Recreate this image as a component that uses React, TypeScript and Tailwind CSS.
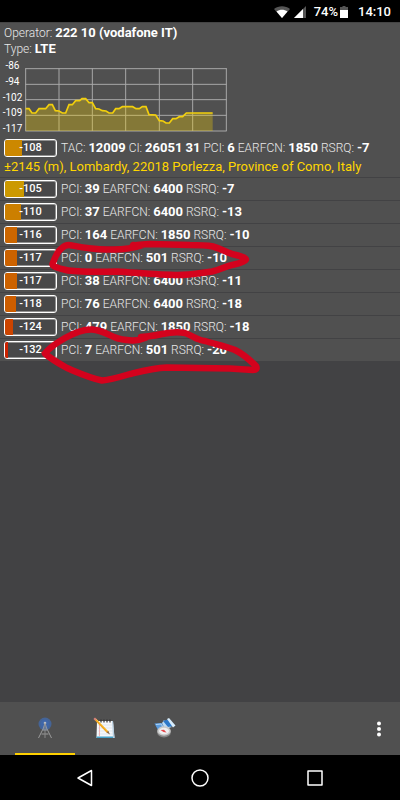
import React from "react";

type Field = [label: string, value: string];

interface Cell {
  level: number;
  fill: number;
  color: string;
  fields: Field[];
}

const serving: Cell = {
  level: -108,
  fill: 17,
  color: "#cc8800",
  fields: [
    ["TAC:", "12009"],
    ["CI:", "26051 31"],
    ["PCI:", "6"],
    ["EARFCN:", "1850"],
    ["RSRQ:", "-7"],
  ],
};

const cell = (
  level: number,
  fill: number,
  color: string,
  pci: string,
  earfcn: string,
  rsrq: string,
): Cell => ({
  level,
  fill,
  color,
  fields: [
    ["PCI:", pci],
    ["EARFCN:", earfcn],
    ["RSRQ:", rsrq],
  ],
});

const neighbours: Cell[] = [
  cell(-105, 19, "#cc9900", "39", "6400", "-7"),
  cell(-110, 16, "#cc7f00", "37", "6400", "-13"),
  cell(-116, 12, "#cc6600", "164", "1850", "-10"),
  cell(-117, 12, "#cc6200", "0", "501", "-10"),
  cell(-117, 12, "#cc6200", "38", "6400", "-11"),
  cell(-118, 11, "#cc5d00", "76", "6400", "-18"),
  cell(-124, 8, "#cc4400", "479", "1850", "-18"),
  cell(-132, 3, "#cc2200", "7", "501", "-20"),
];

function LevelBadge({ level, fill, color }: Cell) {
  return (
    <div className="relative h-[18px] w-[53px] shrink-0 overflow-hidden rounded-[3px] border border-white bg-[#484849] ring-1 ring-inset ring-white/40">
      <div className="h-full" style={{ width: fill, backgroundColor: color }} />
      <span className="absolute inset-0 text-center text-[11px] leading-4 font-medium text-white">
        {level}
      </span>
    </div>
  );
}

function Fields({ fields }: { fields: Field[] }) {
  return (
    <p className="text-[12px] leading-5 font-light whitespace-nowrap text-[#e8e8e8]">
      {fields.map(([label, value]) => (
        <React.Fragment key={label}>
          {label} <b className="text-[13px] font-bold text-white">{value}</b>{" "}
        </React.Fragment>
      ))}
    </p>
  );
}

const line =
  "77,161 87,161 96,174 107,174 117,161 137,161 147,149 157,149 166,167 177,168 187,174 197,174 207,149 217,149 227,137 239,137 246,131 257,131 267,143 277,143 287,161 297,162 307,167 318,168 327,174 338,174 347,161 357,161 367,155 398,155 408,161 418,161 427,155 438,155 447,179 467,180 478,197 489,198 498,204 508,204 518,191 528,191 538,185 548,185 559,174 638,174";

function Chart() {
  return (
    <div className="mt-[2px] flex">
      <div className="flex h-[76px] w-[25px] flex-col justify-between text-center text-[10px] leading-[13px] text-white">
        {["-86", "-94", "-102", "-109", "-117"].map((t) => (
          <span key={t}>{t}</span>
        ))}
      </div>
      <svg
        className="mt-[9px] h-16 w-[202px]"
        viewBox="75 39 606 192"
        role="img"
        aria-label="Signal level history"
      >
        <g stroke="#a8a8a8" strokeWidth="3" fill="none">
          {[77, 177, 277, 377, 478, 578, 679].map((x) => (
            <path key={x} d={`M${x} 40V228`} />
          ))}
          {[41, 88, 134, 181, 228].map((y) => (
            <path key={y} d={`M76 ${y}H680`} />
          ))}
        </g>
        <polygon points={`77,228 ${line} 638,228`} fill="#ffd700" opacity=".3" />
        <polyline points={line} fill="none" stroke="#f2cf0c" strokeWidth="5" />
      </svg>
    </div>
  );
}

function StatusBar() {
  return (
    <header className="flex h-[22px] items-center justify-end bg-black pt-[2px] pr-[9px] text-[13px] leading-5 font-medium text-white">
      <svg className="mr-1 h-3 w-4" viewBox="0 0 16 12" aria-hidden="true">
        <path d="M0 3C4.500-.7 11.500-.7 16 3L8 12Z" fill="#555" />
        <path d="M2.500 5.500C6 3 10 3 13.500 5.500L8 12Z" fill="#fff" />
      </svg>
      <svg className="mr-2 h-3 w-3" viewBox="0 0 12 12" aria-hidden="true">
        <path d="M12 0V12H0Z" fill="#555" />
        <path d="M9 3V12H0Z" fill="#fff" />
      </svg>
      <span>74%</span>
      <svg className="mr-[10px] ml-[2px] h-3 w-2" viewBox="0 0 8 12" aria-hidden="true">
        <path d="M2.500 0h3v1H8v11H0V1h2.500Z" fill="#555" />
        <path d="M0 4h8v8H0Z" fill="#fff" />
      </svg>
      <span>14:10</span>
    </header>
  );
}

function TowerIcon() {
  return (
    <svg className="h-6 w-6" viewBox="0 0 24 24" fill="none" aria-hidden="true">
      <circle cx="12" cy="8" r="6.500" fill="#456496" />
      <circle cx="12" cy="8" r="4.500" fill="#3f66a8" />
      <circle cx="12" cy="7" r="1.300" fill="#b5bcc8" />
      <path d="M12 7 10.500 12 5.500 22M12 7 13.500 12 18.500 22M10 14h4M8.500 18h7" stroke="#a3a3a3" strokeWidth=".9" />
      <path d="M12 8V22" stroke="#888" strokeWidth="1" />
    </svg>
  );
}

function NotepadIcon() {
  return (
    <svg className="h-6 w-6" viewBox="0 0 24 24" fill="none" aria-hidden="true">
      <path d="M4 5H20L21.500 22H3.500Z" fill="#f5f7fa" />
      <path d="M3.500 20.500H21.300L21.500 22H3.500Z" fill="#43a0c8" />
      <path d="M20 5 21.500 22H20L19 5Z" fill="#b5cde0" />
      <path d="M5 9H19.500M5 12H19.500M5 15H20M5 18H20" stroke="#d5dfe9" strokeWidth=".7" />
      <path d="M6.500 7V20" stroke="#f0a4a4" strokeWidth=".8" />
      <path d="M8 3.500v3M11 3.500v3M14 3.500v3M17 3.500v3" stroke="#333" strokeWidth="1.200" />
      <path d="M2.500 3.500 14.500 16" stroke="#f0a51c" strokeWidth="2" />
      <path d="M3 3 15 15.500" stroke="#ffd35a" strokeWidth=".7" />
      <path d="M1.200 2.200 3 4" stroke="#d98378" strokeWidth="2.200" />
      <path d="M13.500 16.500 17 18.500 15.300 14.800Z" fill="#8c6c48" />
    </svg>
  );
}

function MapCompassIcon() {
  return (
    <svg className="h-6 w-6" viewBox="0 0 24 24" fill="none" aria-hidden="true">
      <path d="M1.500 7.500 9 7 12 13 5 14Z" fill="#5b9bdd" />
      <path d="M9 7 11 4 15 9 19 11 12 13Z" fill="#b9daf5" />
      <path d="M10 5 15 3.500 20 10 15 11Z" fill="#2d78c8" />
      <path d="M14 3 16 2 22.500 9.500 20 11.500Z" fill="#d7ecfb" />
      <path d="M3 8.500 8 8 10 11" stroke="#b0d5f5" />
      <ellipse cx="11" cy="16.500" rx="6.800" ry="5" fill="#858585" />
      <ellipse cx="11" cy="15" rx="6.800" ry="4.700" fill="#c9c9c9" />
      <ellipse cx="11" cy="15" rx="5" ry="3.300" fill="#eef0f2" />
      <path d="M7.500 14 11 13.800 13.500 16.500 10.500 16Z" fill="#e3474b" />
    </svg>
  );
}

const tabs = [
  { label: "Cells", icon: <TowerIcon />, active: true },
  { label: "Log", icon: <NotepadIcon />, active: false },
  { label: "Map", icon: <MapCompassIcon />, active: false },
];

function Toolbar() {
  return (
    <nav className="mt-auto flex h-[53px] bg-[#505050] pl-[15px]">
      {tabs.map((tab) => (
        <button
          key={tab.label}
          type="button"
          aria-label={tab.label}
          className={
            tab.active
              ? "flex w-[60px] items-center justify-center border-b-2 border-[#ffd000]"
              : "flex w-[60px] items-center justify-center border-b-2 border-transparent"
          }
        >
          {tab.icon}
        </button>
      ))}
      <button type="button" aria-label="More options" className="ml-auto flex w-[42px] items-center justify-center">
        <svg className="h-4 w-1" viewBox="0 0 4 16" fill="#fff" aria-hidden="true">
          <circle cx="2" cy="2.500" r="2" />
          <circle cx="2" cy="8" r="2" />
          <circle cx="2" cy="13.500" r="2" />
        </svg>
      </button>
    </nav>
  );
}

function SystemNav() {
  return (
    <footer className="flex h-[45px] justify-center bg-black">
      <button type="button" aria-label="Back" className="flex w-[115px] items-center justify-center">
        <svg className="h-[18px] w-[18px]" viewBox="0 0 18 18" fill="none" stroke="#fff" strokeWidth="1.500" strokeLinejoin="round" aria-hidden="true">
          <path d="M15.500 1.500V16.500L2 9Z" />
        </svg>
      </button>
      <button type="button" aria-label="Home" className="flex w-[115px] items-center justify-center">
        <svg className="h-[18px] w-[18px]" viewBox="0 0 18 18" fill="none" stroke="#fff" strokeWidth="1.500" aria-hidden="true">
          <circle cx="9" cy="9" r="8" />
        </svg>
      </button>
      <button type="button" aria-label="Recent apps" className="flex w-[115px] items-center justify-center">
        <svg className="h-[18px] w-[18px]" viewBox="0 0 18 18" fill="none" stroke="#fff" strokeWidth="1.500" strokeLinejoin="round" aria-hidden="true">
          <path d="M2 2H16V16H2Z" />
        </svg>
      </button>
    </footer>
  );
}

/* Hand-drawn marks around the two EARFCN 501 rows. */
function Marker() {
  return (
    <svg
      className="pointer-events-none absolute top-0 left-0 h-[210px] w-[270px]"
      viewBox="0 177 270 210"
      fill="none"
      stroke="#d4021d"
      strokeWidth="6.500"
      strokeLinecap="round"
      strokeLinejoin="round"
      aria-hidden="true"
    >
      <path d="M133 245C137 246 141 244 150 244L190 245Q205 245 213 246.500C222 249 228 253 234 254.500Q246 257 246 259.500Q245 262 234 264.500C225 266 220 270 212 271.500C200 273 190 275 178 275C160 275 140 273 117 271.500C95 272 75 272 66 270Q52 267 52.500 264C55 258 57 251 62 248Q66 244 72 245.500C85 248 95 250 110 249.500C125 250 134 248 143 245" />
      <path d="M141 337C150 336 154 336 162 334Q176 331 185 333C192 335 196 340 205 341C215 344 226 346 235 350C243 354 250 360 256 366Q258 370 253 370L230 368.500L167 367.500C153 368 142 371 130 374Q110 380 102 380.500C90 378 79 373 67 368C58 363 51 359 45 353.500C50 347 58 342 65 338C74 333 83 329 92 329.500C101 330 107 334 114 337Q121 340 132 340.500C139 341 142 339 147 337" />
    </svg>
  );
}

export default function App() {
  return (
    <div className="flex min-h-screen flex-col bg-[#424244] font-[Roboto,'Liberation_Sans',sans-serif]">
      <StatusBar />
      <main>
        <section className="border-t border-[#444] bg-[#505050] pt-[2px]">
          <div className="px-1 text-[12px] leading-4 font-light text-[#e8e8e8]">
            <p>
              Operator: <b className="text-[13px] font-bold text-white">222 10 (vodafone IT)</b>
            </p>
            <p>
              Type: <b className="text-[13px] font-bold text-white">LTE</b>
            </p>
          </div>
          <Chart />
          <div className="flex items-center gap-1 px-1 pt-[3px]">
            <LevelBadge {...serving} />
            <Fields fields={serving.fields} />
          </div>
          <p className="px-1 pt-[1px] pb-[2px] text-[13px] leading-4 whitespace-nowrap text-[#ffd600]">
            ±2145 (m), Lombardy, 22018 Porlezza, Province of Como, Italy
          </p>
        </section>
        <div className="relative">
          <ul className="bg-[#505050]">
            {neighbours.map((n, i) => (
              <li key={i} className="flex h-[23px] items-center gap-1 border-t border-[#424244] px-1">
                <LevelBadge {...n} />
                <Fields fields={n.fields} />
              </li>
            ))}
          </ul>
          <Marker />
        </div>
      </main>
      <Toolbar />
      <SystemNav />
    </div>
  );
}
